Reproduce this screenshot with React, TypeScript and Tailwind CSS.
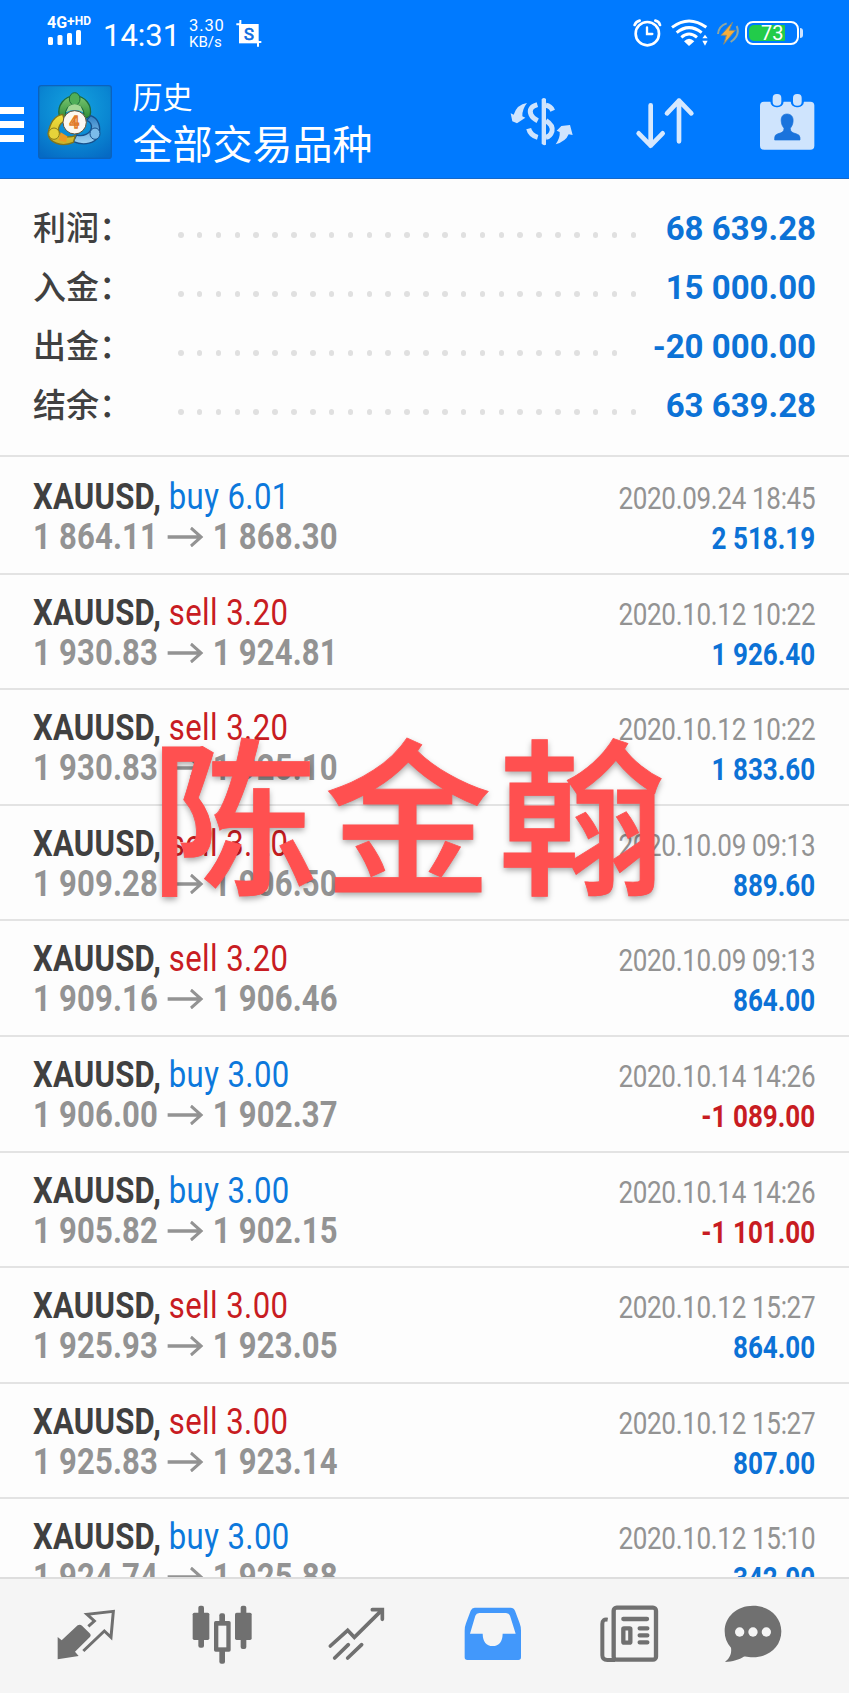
const summary = [
  { label: "利润", value: "68 639.28", dots: 25 },
  { label: "入金", value: "15 000.00", dots: 25 },
  { label: "出金", value: "-20 000.00", dots: 24 },
  { label: "结余", value: "63 639.28", dots: 25 },
]

const deals = [
  { side: "buy", volume: "6.01", open: "1 864.11", close: "1 868.30", time: "2020.09.24 18:45", profit: "2 518.19" },
  { side: "sell", volume: "3.20", open: "1 930.83", close: "1 924.81", time: "2020.10.12 10:22", profit: "1 926.40" },
  { side: "sell", volume: "3.20", open: "1 930.83", close: "1 925.10", time: "2020.10.12 10:22", profit: "1 833.60" },
  { side: "sell", volume: "3.20", open: "1 909.28", close: "1 906.50", time: "2020.10.09 09:13", profit: "889.60" },
  { side: "sell", volume: "3.20", open: "1 909.16", close: "1 906.46", time: "2020.10.09 09:13", profit: "864.00" },
  { side: "buy", volume: "3.00", open: "1 906.00", close: "1 902.37", time: "2020.10.14 14:26", profit: "-1 089.00" },
  { side: "buy", volume: "3.00", open: "1 905.82", close: "1 902.15", time: "2020.10.14 14:26", profit: "-1 101.00" },
  { side: "sell", volume: "3.00", open: "1 925.93", close: "1 923.05", time: "2020.10.12 15:27", profit: "864.00" },
  { side: "sell", volume: "3.00", open: "1 925.83", close: "1 923.14", time: "2020.10.12 15:27", profit: "807.00" },
  { side: "buy", volume: "3.00", open: "1 924.74", close: "1 925.88", time: "2020.10.12 15:10", profit: "342.00" },
]

function StatusBar() {
  return (
    <div className="flex h-[66px] items-start pl-[47px] pr-[46px] text-white">
      <div className="mt-[15px] w-[46px]">
        <div className="flex items-start whitespace-nowrap font-bold leading-none">
          <span className="text-[16px] leading-[16px]">4G</span>
          <span className="text-[14px] leading-[12px]">+</span>
          <span className="text-[12px] leading-[12px]">HD</span>
        </div>
        <svg className="-mt-px ml-px" width="34" height="16" viewBox="0 0 34 16" fill="white">
          <rect x="0" y="7" width="5" height="8" rx="1.5" />
          <rect x="9.5" y="5" width="5" height="10" rx="1.5" />
          <rect x="19" y="3" width="5" height="12" rx="1.5" />
          <rect x="28" y="0" width="5" height="15" rx="1.5" />
        </svg>
      </div>
      <p className="ml-[10px] mt-[17.5px] w-[76px] text-[31px] leading-[36px]">14:31</p>
      <div className="ml-[10px] mt-[18px] w-[40px] leading-[16px]">
        <p className="text-[16.5px] tracking-[0.9px]">3.30</p>
        <p className="text-[15px]">KB/s</p>
      </div>
      <svg className="ml-[7px] mt-[20px]" width="27" height="28" viewBox="709 60 81 84">
        <path d="M718 72H777V130H718Z" fill="white" />
        <path d="M710 73H722M722 60V76M770 126H785M775 122V140" stroke="white" strokeWidth="6" />
        <text x="748" y="119" fontSize="50" fill="#0b6be0" textAnchor="middle" stroke="#0b6be0" strokeWidth="2">S</text>
      </svg>
      <svg className="ml-auto mt-[18px]" width="30" height="30" viewBox="625 54 90 90" fill="none" stroke="white" strokeLinecap="round">
        <circle cx="668" cy="101" r="35" strokeWidth="8" />
        <path d="M667 82V102H683" strokeWidth="7" />
        <path d="M630 75Q634 64 645 62M692 62Q703 64 706 75" strokeWidth="8" />
      </svg>
      <svg className="ml-[8px] mt-[18px]" width="39" height="30" viewBox="737 54 117 90" fill="none" stroke="white">
        <path d="M740 82Q791 44 843 82" strokeWidth="9" />
        <path d="M754 98Q791 68 829 98" strokeWidth="9" />
        <path d="M768 112Q791 92 815 112" strokeWidth="9" />
        <path d="M776 124Q791 109 807 124L791 138Z" fill="white" stroke="none" />
        <path d="M839 104L847 115H831ZM839 137L847 122H831Z" fill="white" stroke="none" />
      </svg>
      <svg className="ml-[6px] mt-[21px]" width="24" height="24" viewBox="874 63 72 72">
        <path d="M906 70Q882 78 880 102M936 78Q948 106 918 126" fill="none" stroke="#8fa7a0" strokeWidth="6" />
        <path d="M924 66L889 106H905L897 133L932 91H914Z" fill="#f5ad3c" stroke="#7a8b86" strokeWidth="3" />
      </svg>
      <div className="ml-[5px] mt-[21px] flex items-center">
        <div className="h-[24px] w-[54px] rounded-[8px] border-2 border-white p-[2px]">
          <div className="flex h-full w-[36px] items-center rounded-l-[5px] rounded-r-[1px] bg-[#22cc4a] pl-[12px] text-[20px] leading-none">
            73
          </div>
        </div>
        <div className="ml-px h-[10px] w-[3px] rounded-r-sm bg-[#cfe4ff]" />
      </div>
    </div>
  )
}

function AppLogo() {
  return (
    <svg width="74" height="74" viewBox="116 258 222 222">
      <defs>
        <radialGradient id="bg" cx="0.5" cy="0.3" r="0.8">
          <stop offset="0" stopColor="#14a3df" />
          <stop offset="0.6" stopColor="#0a86d2" />
          <stop offset="1" stopColor="#056ac4" />
        </radialGradient>
        <linearGradient id="green" x1="0" y1="0" x2="0" y2="1">
          <stop offset="0" stopColor="#7cc873" />
          <stop offset="1" stopColor="#2c8a35" />
        </linearGradient>
        <linearGradient id="yellow" x1="0" y1="0" x2="0" y2="1">
          <stop offset="0" stopColor="#f2e23c" />
          <stop offset="1" stopColor="#c9b02a" />
        </linearGradient>
        <linearGradient id="blue" x1="0" y1="0" x2="0" y2="1">
          <stop offset="0" stopColor="#2f7fc4" />
          <stop offset="1" stopColor="#9fd4f5" />
        </linearGradient>
      </defs>
      <rect x="118" y="260" width="218" height="218" rx="8" fill="url(#bg)" stroke="#0b62bd" strokeWidth="4" />
      <path d="M180 352C172 318 196 292 226 290C258 292 280 318 272 352L252 360C258 334 246 318 226 318C206 318 194 334 200 360Z" fill="url(#green)" stroke="#1e6b3a" strokeWidth="4" />
      <path d="M274 350C298 358 306 384 298 410C288 432 256 442 222 428L232 408C252 414 272 404 276 388C278 376 272 368 262 364Z" fill="url(#blue)" stroke="#17508c" strokeWidth="4" />
      <path d="M190 346C166 350 152 370 146 404C148 430 186 446 222 430L228 410C206 418 182 412 178 396C176 382 184 372 196 366Z" fill="url(#yellow)" stroke="#7d7420" strokeWidth="4" />
      <ellipse cx="226" cy="300" rx="16" ry="19" fill="#4fae58" stroke="#1e6b3a" strokeWidth="3" />
      <path d="M208 322Q226 310 244 322L252 340Q226 326 200 340Z" fill="#a5d896" />
      <ellipse cx="164" cy="404" rx="16" ry="17" fill="#e6d33a" stroke="#8a7b1a" strokeWidth="3" />
      <path d="M184 400L204 412L200 430L178 424Z" fill="#eb9a22" />
      <ellipse cx="287" cy="404" rx="15" ry="17" fill="#7cbcea" stroke="#17508c" strokeWidth="3" />
      <circle cx="226" cy="370" r="35" fill="#fbf8f2" stroke="#5e5137" strokeWidth="3" />
      <text x="225" y="388" fontSize="50" fontWeight="700" fill="#ffd9a0" stroke="#e07a2a" strokeWidth="4" textAnchor="middle">4</text>
    </svg>
  )
}

function TitleBar() {
  return (
    <div className="flex h-[112px] items-start pr-[33px] text-white">
      <div className="mt-[41px] flex w-[24px] flex-col gap-[7.5px]">
        <div className="h-[6.5px] bg-white" />
        <div className="h-[6.5px] bg-white" />
        <div className="h-[6.5px] bg-white" />
      </div>
      <div className="ml-[14px] mt-[19px]">
        <AppLogo />
      </div>
      <div className="ml-[20.5px] mt-[14px] w-[250px]">
        <p className="text-[30px] leading-[36px]">历史</p>
        <p className="mt-[2px] text-[40px] leading-[56px]">全部交易品种</p>
      </div>
      <svg className="ml-auto mt-[29px]" width="64" height="52" viewBox="258 285 192 156" fill="#cfe4fd">
        <path d="M260 340L269 344Q279 313 309 309Q294 328 295 349L304 353L279 370L265 364Z" />
        <path d="M446 405L434 403Q425 425 395 433Q409 413 407 396L398 392L412 378L438 375Z" />
        <path d="M353 298Q359 290 366 297V434Q359 438 353 431Z" />
        <path d="M340 314Q312 322 321 344Q325 354 341 362M366 316Q380 318 386 332M366 362Q388 376 384 394Q379 410 366 412M314 386Q319 406 341 412" fill="none" stroke="#cfe4fd" strokeWidth="15" />
      </svg>
      <svg className="ml-[61px] mt-[29.5px]" width="60" height="54" viewBox="630 285 180 162" fill="none" stroke="#d6e8fe" strokeWidth="14" strokeLinecap="round" strokeLinejoin="round">
        <path d="M677 313V434M641 397L677 434L713 397" />
        <path d="M762 421V299M726 337L762 299L799 337" />
      </svg>
      <svg className="ml-[64px] mt-[26px]" width="57" height="60" viewBox="1003 276 171 180">
        <rect x="1006" y="305" width="163" height="144" rx="12" fill="#cfe4fd" />
        <rect x="1037" y="276" width="40" height="46" rx="18" fill="#007aff" />
        <rect x="1098" y="276" width="40" height="46" rx="18" fill="#007aff" />
        <rect x="1044" y="282" width="26" height="35" rx="12" fill="#cfe4fd" />
        <rect x="1105" y="282" width="26" height="35" rx="12" fill="#cfe4fd" />
        <path d="M1087 342C1072 342 1068 354 1070 366C1071 376 1075 380 1078 385Q1079 398 1060 401Q1050 404 1050 413V420H1126V413Q1126 404 1114 401Q1096 398 1097 385C1100 380 1104 376 1105 366C1107 354 1102 342 1087 342Z" fill="#1a73dc" stroke="#1a73dc" strokeWidth="2" />
      </svg>
    </div>
  )
}

function DealRow({ deal }: { deal: (typeof deals)[number] }) {
  const sideColor = deal.side === "buy" ? "text-[#0c78dc]" : "text-[#c81c22]"
  const profitColor = deal.profit.startsWith("-") ? "text-[#c81c22]" : "text-[#0c72d6]"

  return (
    <div className="flex h-[115.6px] shrink-0 justify-between border-b-2 border-[#e3e3e3] pl-[33px] pr-[34px] pt-[17px]">
      <div className="w-[420px] origin-left scale-x-[0.84] whitespace-nowrap">
        <p className="text-[37px] leading-[42px]">
          <span className="font-bold tracking-[0.25px] text-[#404040]">XAUUSD,</span>{" "}
          <span className={`tracking-[0.5px] ${sideColor}`}>{deal.side} {deal.volume}</span>
        </p>
        <p className="-mt-[2px] flex items-center text-[37px] font-bold leading-[42px] tracking-[0.2px] text-[#939393]">
          <span className="w-[160px]">{deal.open}</span>
          <svg className="mr-[11px]" width="43" height="20" viewBox="0 0 43 20" fill="none" stroke="#939393" strokeWidth="3.4">
            <path d="M0 10H40M28 1L40 10L28 19" />
          </svg>
          <span>{deal.close}</span>
        </p>
      </div>
      <div className="origin-right scale-x-[0.84] whitespace-nowrap pt-[3px] text-right text-[31px]">
        <p className="leading-[40px] tracking-[-0.4px] text-[#939393]">{deal.time}</p>
        <p className={`font-bold leading-[40px] ${profitColor}`}>{deal.profit}</p>
      </div>
    </div>
  )
}

function BottomNav() {
  return (
    <div className="flex h-[116px] shrink-0 items-start border-t-2 border-[#dedede] bg-[#f5f5f5] pl-[18.5px] pt-[24px]">
      <div className="flex w-[135.6px] justify-center">
        <svg width="60" height="62" viewBox="171 309 180 186">
          <path d="M176 411L188 421L236 376Q243 372 249 377L272 400Q278 406 272 412L228 455L239 468L176 478Z" fill="#707070" />
          <path d="M268 379L286 363L264 343L343 334L336 412L316 393L253 453" fill="none" stroke="#707070" strokeWidth="9" />
        </svg>
      </div>
      <div className="flex w-[135.6px] justify-center">
        <svg width="60" height="62" viewBox="573 309 180 186" fill="#707070">
          <rect x="592" y="317" width="17" height="126" rx="6" />
          <rect x="575" y="338" width="50" height="82" rx="5" />
          <rect x="719" y="317" width="17" height="130" rx="6" />
          <rect x="702" y="338" width="50" height="82" rx="5" />
          <rect x="655" y="340" width="17" height="151" rx="6" />
          <rect x="639" y="363" width="50" height="92" rx="5" />
          <rect x="652" y="377" width="24" height="65" fill="#f5f5f5" />
        </svg>
      </div>
      <div className="flex w-[135.6px] justify-center">
        <svg width="60" height="62" viewBox="982 309 180 186" fill="none" stroke="#707070" strokeWidth="11" strokeLinecap="round">
          <path d="M992 438L1044 391L1064 412L1145 332M1118 329H1148V358" />
          <path d="M1005 474L1046 434M1044 474L1086 434" />
        </svg>
      </div>
      <div className="flex w-[135.6px] justify-center">
        <svg width="60" height="62" viewBox="113 309 180 186">
          <path fillRule="evenodd" d="M148 323H256Q265 323 269 332L283 370Q287 380 287 392V472Q287 480 279 480H126Q118 480 118 472V392Q118 380 122 370L136 332Q140 323 148 323ZM162 339Q153 339 150 347L134 401H172Q173 438 202 438Q231 438 232 401H271L254 347Q251 339 242 339Z" fill="#4298fb" />
        </svg>
      </div>
      <div className="flex w-[135.6px] justify-center">
        <svg width="60" height="62" viewBox="521 309 180 186" fill="none" stroke="#707070">
          <rect x="565" y="323" width="127" height="156" rx="9" strokeWidth="13" />
          <path d="M547 359Q531 356 531 372V466Q531 480 546 480H570" strokeWidth="12" />
          <path d="M594 357H665" strokeWidth="13" strokeLinecap="round" />
          <rect x="594" y="385" width="21" height="43" rx="2" strokeWidth="13" />
          <path d="M643 385H666M643 406H666M643 427H666" strokeWidth="13" strokeLinecap="round" />
        </svg>
      </div>
      <div className="flex w-[113px] justify-center">
        <svg width="60" height="62" viewBox="894 309 180 186">
          <path d="M984 317C1032 317 1069 350 1069 394C1069 440 1032 472 984 472C972 472 964 468 956 470C944 478 922 485 900 486C912 476 921 464 918 443C905 429 899 413 899 394C899 350 936 317 984 317Z" fill="#707070" />
          <circle cx="944" cy="396" r="14" fill="#f5f5f5" />
          <circle cx="984" cy="396" r="14" fill="#f5f5f5" />
          <circle cx="1024" cy="396" r="14" fill="#f5f5f5" />
        </svg>
      </div>
    </div>
  )
}

export default function App() {
  return (
    <div className="relative flex h-[1693px] w-[849px] flex-col overflow-hidden bg-[#fdfdfd] font-[Roboto,'Noto_Sans_CJK_SC',sans-serif]">
      <header className="h-[179px] shrink-0 border-b border-[#1668c8] bg-[#007aff]">
        <StatusBar />
        <TitleBar />
      </header>

      <section className="h-[278px] shrink-0 border-b-2 border-[#e3e3e3] px-[33px] pt-[20px]">
        {summary.map((item) => (
          <div key={item.label} className="flex h-[59px] items-center">
            <p className="w-[145px] text-[33px] font-medium leading-[59px] text-[#404040]">{item.label}：</p>
            <div className="mt-[13px] flex gap-[13.37px]">
              {Array.from({ length: item.dots }, (_, i) => (
                <span key={i} className="size-[5.5px] rounded-full bg-[#e0e0e0]" />
              ))}
            </div>
            <p className="ml-auto mt-px whitespace-nowrap text-[33px] font-bold text-[#0c72d6]">{item.value}</p>
          </div>
        ))}
      </section>

      <section className="flex min-h-0 flex-1 flex-col overflow-hidden pt-[2px]">
        {deals.map((deal, i) => (
          <DealRow key={i} deal={deal} />
        ))}
      </section>

      <BottomNav />

      <p className="absolute left-[150px] top-[705px] whitespace-nowrap text-[168px] font-medium leading-[240px] tracking-[6px] text-[#ff5050] [-webkit-text-stroke:0.8px_#ff5050] [text-shadow:0_3px_6px_rgba(0,0,0,0.35)]">
        陈金翰
      </p>
    </div>
  )
}
